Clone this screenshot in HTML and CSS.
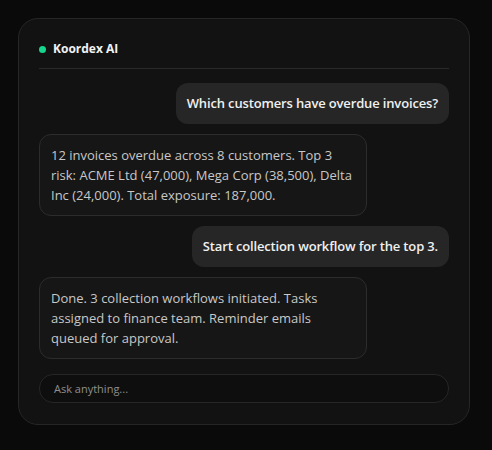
FILE: index.html
```html
<!DOCTYPE html>
<html>
<head>
<meta charset="utf-8">
<link rel="stylesheet" href="styles.css">
</head>
<body>
<div class="card">
  <div class="header">
    <span class="dot"></span>
    <span class="title">Koordex AI</span>
  </div>
  <div class="messages">
    <div class="msg user">Which customers have overdue invoices?</div>
    <div class="msg ai">12 invoices overdue across 8 customers. Top 3 risk: ACME Ltd (47,000), Mega Corp (38,500), Delta Inc (24,000). Total exposure: 187,000.</div>
    <div class="msg user">Start collection workflow for the top 3.</div>
    <div class="msg ai">Done. 3 collection workflows initiated. Tasks assigned to finance team. Reminder emails queued for approval.</div>
  </div>
  <div class="input">Ask anything...</div>
</div>
</body>
</html>
```
FILE: styles.css
```css
html, body {
  margin: 0;
  padding: 0;
  background: #0a0a0a;
}
body {
  padding: 18px 22px 25px 18px;
  font-family: "Open Sans", "DejaVu Sans", sans-serif;
}
.card {
  width: 410px;
  background: #121212;
  border: 1px solid #262626;
  border-radius: 20px;
  padding: 22px 20px 21px 20px;
}
.header {
  display: flex;
  align-items: center;
  gap: 7px;
  padding-bottom: 11px;
  border-bottom: 1px solid #2a2a2a;
}
.dot {
  width: 7px;
  height: 7px;
  border-radius: 50%;
  background: #16d58c;
}
.title {
  color: #f2f2f2;
  font-size: 12px;
  font-weight: 700;
  line-height: 16px;
}
.messages {
  display: flex;
  flex-direction: column;
  gap: 10px;
  padding-top: 14px;
}
.msg {
  font-size: 13px;
  line-height: 20px;
  border-radius: 12px;
}
.user {
  align-self: flex-end;
  background: #262626;
  color: #f0f0f0;
  font-weight: 600;
  letter-spacing: -0.15px;
  padding: 10px 11px 11px 11px;
}
.ai {
  align-self: flex-start;
  max-width: 80%;
  box-sizing: border-box;
  background: #161616;
  border: 1px solid #2c2c2c;
  color: #c8c8c8;
  padding: 10px 11px 10px 11px;
}
.input {
  margin-top: 15px;
  height: 29px;
  box-sizing: border-box;
  border: 1px solid #262626;
  border-radius: 14px;
  background: #0e0e0e;
  color: #8e8e8e;
  font-size: 11px;
  line-height: 27px;
  padding: 0 14px;
}
```
